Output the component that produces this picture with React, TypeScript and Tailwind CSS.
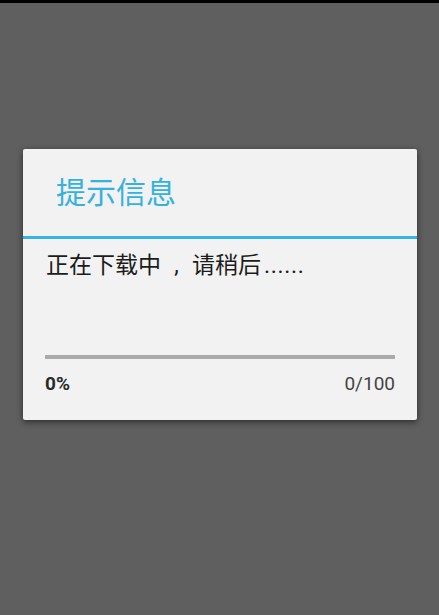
import React from "react";

export default function App() {
  return (
    <div className="w-full h-[615px] flex flex-col bg-[#5e5f5e] overflow-hidden">
      <div className="h-[3px] w-full bg-black shrink-0" />
      <div className="flex-1 pt-[146px] pl-[23px]">
        <div className="w-[394px] h-[271px] bg-[#f2f2f2] rounded-[2px] shadow-[0_2px_6px_rgba(0,0,0,0.55)] flex flex-col">
          <div className="h-[87px] pt-[26px] pl-[33px] shrink-0">
            <div className="text-[30px] leading-[30px] text-[#35b1e0] font-['Noto_Sans_CJK_SC',sans-serif]">
              提示信息
            </div>
          </div>
          <div className="h-[3px] bg-[#38b4e2] shrink-0" />
          <div className="pt-[15px] px-[22px] flex flex-col">
            <div className="text-[23px] leading-[23px] text-[#1c1c1c] font-['Roboto','Noto_Sans_CJK_SC',sans-serif] whitespace-nowrap pl-px">
              正在下载中
              <span className="inline-block w-[31px] text-center">,</span>
              请稍后<span className="tracking-[0.7px] pl-[3px]">......</span>
            </div>
            <div className="mt-[78px] h-[4px] bg-[#aaaaaa]" />
            <div className="mt-[15px] flex justify-between text-[19px] leading-[19px] font-['Roboto',sans-serif]">
              <span className="font-bold text-[#2a2a2a]">0%</span>
              <span className="text-[#444444]">0/100</span>
            </div>
          </div>
        </div>
      </div>
    </div>
  );
}
